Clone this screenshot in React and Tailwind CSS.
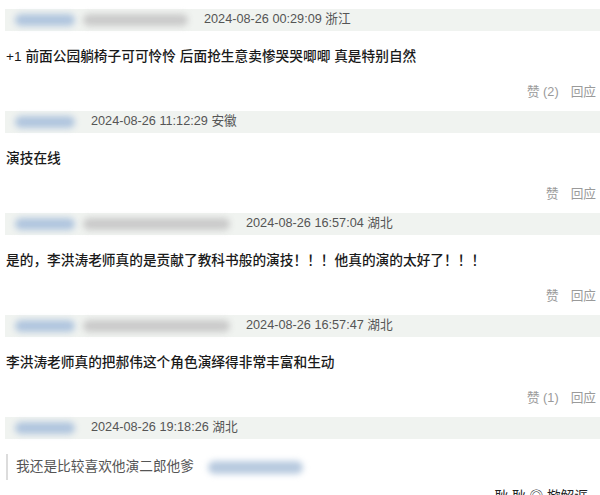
import React from "react";

const comments = [
  {
    nameW: 105,
    date: "2024-08-26 00:29:09 浙江",
    text: "+1 前面公园躺椅子可可怜怜 后面抢生意卖惨哭哭唧唧 真是特别自然",
    likes: "(2)",
  },
  {
    nameW: 0,
    date: "2024-08-26 11:12:29 安徽",
    text: "演技在线",
    likes: "",
  },
  {
    nameW: 147,
    date: "2024-08-26 16:57:04 湖北",
    text: "是的，李洪涛老师真的是贡献了教科书般的演技！！！他真的演的太好了！！！",
    likes: "",
  },
  {
    nameW: 147,
    date: "2024-08-26 16:57:47 湖北",
    text: "李洪涛老师真的把郝伟这个角色演绎得非常丰富和生动",
    likes: "(1)",
  },
];

const font = "font-['Liberation_Sans','Noto_Sans_CJK_SC',sans-serif]";

const Header = ({ nameW, date }) => (
  <div className="ml-[5px] h-[22px] bg-[#f0f3f0] flex items-center pl-[10px]">
    <div className="flex items-center gap-[8px]">
      <div className="w-[60px] h-[12px] rounded-full bg-[#b0c5de] blur-[3px]" />
      {nameW > 0 && (
        <div
          className="h-[12px] rounded-full bg-[#cacaca] blur-[3px]"
          style={{ width: nameW }}
        />
      )}
    </div>
    <span className={`ml-[16px] text-[12.7px] text-[#555] ${font}`}>{date}</span>
  </div>
);

const Actions = ({ likes }) => (
  <div className="mt-[18px] h-[18px] flex justify-end items-center gap-[12px] pr-[4px] text-[12.7px] text-[#9a9a9a]">
    <span>赞{likes ? ` ${likes}` : ""}</span>
    <span>回应</span>
  </div>
);

const App = () => {
  return (
    <div className={`w-[600px] h-[495px] overflow-hidden bg-white pt-[9px] ${font}`}>
      {comments.map((c, i) => (
        <div key={i} className="mb-[9px]">
          <Header nameW={c.nameW} date={c.date} />
          <p className="mt-[17px] ml-[6px] leading-[18px] text-[13.7px] font-medium text-[#1a1a1a]">
            {c.text}
          </p>
          <Actions likes={c.likes} />
        </div>
      ))}
      <div>
        <Header nameW={0} date="2024-08-26 19:18:26 湖北" />
        <div className="mt-[15px] ml-[6px] flex items-center border-l-2 border-[#dcdcdc] h-[26px] pl-[8px]">
          <span className="text-[13.7px] text-[#555]">我还是比较喜欢他演二郎他爹</span>
          <div className="ml-[14px] w-[95px] h-[13px] rounded-full bg-[#b8cadf] blur-[3px]" />
        </div>
        <div className="mt-[8px] pr-[12px] flex justify-end text-[13.7px] text-[#222] leading-[18px]">
          耿 耿 ◎ 揿解诓
        </div>
      </div>
    </div>
  );
};

export default App;
